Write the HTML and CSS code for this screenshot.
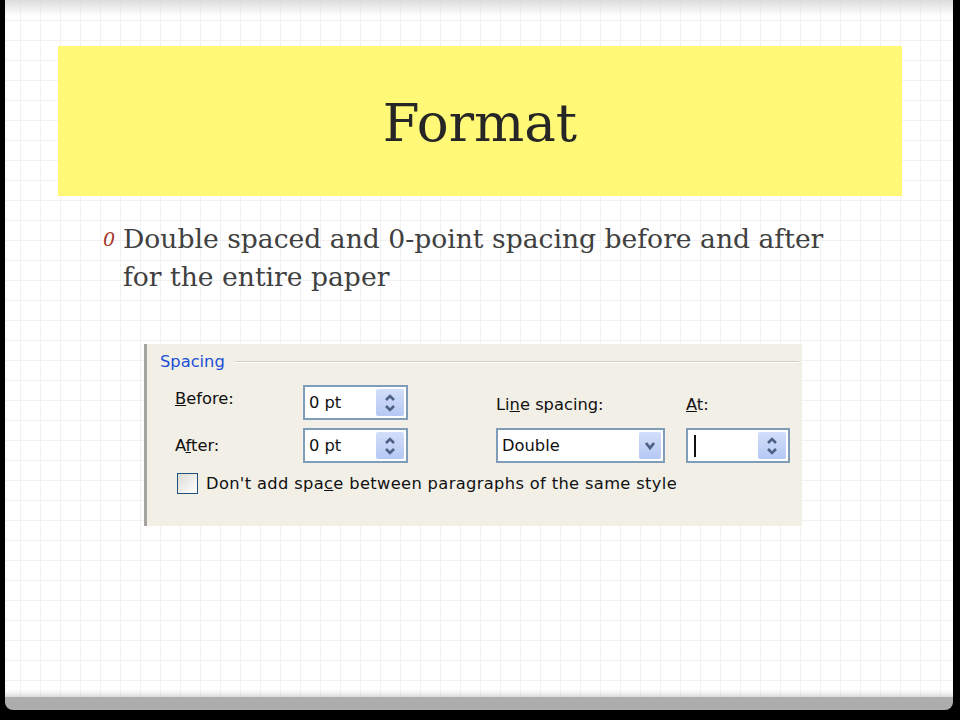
FILE: index.html
```html
<!DOCTYPE html>
<html lang="en">
<head>
    <meta charset="UTF-8">
    <title>Format</title>
    <link rel="stylesheet" href="styles.css">
</head>
<body>
    <div class="slide">
        <div class="title-bar">
            <h1>Format</h1>
        </div>

        <div class="bullet">
            <span class="bullet-mark">0</span>
            <p>Double spaced and 0-point spacing before and after for the entire paper</p>
        </div>

        <!-- Word paragraph dialog, spacing group -->
        <div class="dialog">
            <div class="group-head">
                <span class="group-name">Spacing</span>
                <span class="group-line"></span>
            </div>

            <div class="fields">
                <span class="label before"><u>B</u>efore:</span>
                <div class="box col-2">
                    <span class="value">0 pt</span>
                    <span class="spin-btn">
                        <svg width="14" height="22" viewBox="0 0 14 22"><path d="M3 8 L7 4 L11 8" fill="none" stroke="#4d6185" stroke-width="2.6"/><path d="M3 14 L7 18 L11 14" fill="none" stroke="#4d6185" stroke-width="2.6"/></svg>
                    </span>
                </div>
                <span class="label col-4">Li<u>n</u>e spacing:</span>
                <span class="label col-6"><u>A</u>t:</span>

                <span class="label after">A<u>f</u>ter:</span>
                <div class="box col-2">
                    <span class="value">0 pt</span>
                    <span class="spin-btn">
                        <svg width="14" height="22" viewBox="0 0 14 22"><path d="M3 8 L7 4 L11 8" fill="none" stroke="#4d6185" stroke-width="2.6"/><path d="M3 14 L7 18 L11 14" fill="none" stroke="#4d6185" stroke-width="2.6"/></svg>
                    </span>
                </div>
                <div class="box col-4">
                    <span class="value">Double</span>
                    <span class="spin-btn drop">
                        <svg width="14" height="14" viewBox="0 0 14 14"><path d="M3 4 L7 9 L11 4" fill="none" stroke="#4d6185" stroke-width="2.8"/></svg>
                    </span>
                </div>
                <div class="box col-6">
                    <span class="value"><span class="caret"></span></span>
                    <span class="spin-btn">
                        <svg width="14" height="22" viewBox="0 0 14 22"><path d="M3 8 L7 4 L11 8" fill="none" stroke="#4d6185" stroke-width="2.6"/><path d="M3 14 L7 18 L11 14" fill="none" stroke="#4d6185" stroke-width="2.6"/></svg>
                    </span>
                </div>
            </div>

            <label class="check-row">
                <span class="checkbox"></span>
                <span class="check-text">Don't add spa<u>c</u>e between paragraphs of the same style</span>
            </label>
        </div>
    </div>
</body>
</html>
```

FILE: styles.css
```css
body {
    margin: 0;
    background-color: #000;
    font-family: 'DejaVu Serif', serif;
}
.slide {
    width: 948px;
    height: 697px;
    margin-left: 5px;
    border-bottom: 13px solid #adadad;
    border-radius: 0 0 8px 8px;
    background-color: #fff;
    background-image:
        linear-gradient(to bottom, #dcdcdc, rgba(255,255,255,0) 16px),
        linear-gradient(to right, #f1f1f1 1px, transparent 1px),
        linear-gradient(to bottom, #f1f1f1 1px, transparent 1px);
    background-size: 100% 100%, 20px 20px, 20px 20px;
    background-position: 0 0, 15px 0, 0 0;
    background-repeat: no-repeat, repeat, repeat;
    box-shadow: inset 0 -6px 6px -4px #cfcfcf;
    overflow: hidden;
}
.title-bar {
    margin: 46px 0 0 53px;
    width: 844px;
    height: 150px;
    background-color: #fff977;
    display: flex;
    align-items: center;
    justify-content: center;
}
h1 {
    margin: 0;
    padding-top: 2px;
    font-size: 53px;
    font-weight: normal;
    color: #262626;
}

/* bullet text */
.bullet {
    display: flex;
    margin: 24px 0 0 98px;
    width: 740px;
}
.bullet-mark {
    width: 20px;
    font-size: 19px;
    font-style: italic;
    color: #a5372b;
    padding-top: 8px;
}
.bullet p {
    margin: 0;
    width: 712px;
    font-size: 26.6px;
    line-height: 38px;
    color: #404040;
}

/* dialog */
.dialog {
    margin: 48px 0 0 139px;
    width: 655px;
    height: 182px;
    border-left: 3px solid #a3a3a0;
    background-color: #f1efe6;
    font-family: 'DejaVu Sans', sans-serif;
    font-size: 16.3px;
    color: #111;
}
.group-head {
    display: flex;
    align-items: center;
    gap: 10px;
    padding: 8px 3px 0 13px;
}
.group-name {
    color: #1c4fd6;
}
.group-line {
    flex: 1;
    height: 0;
    border-top: 1px solid #d2d0c4;
    border-bottom: 1px solid #fff;
}
.fields {
    display: grid;
    grid-template-columns: 128px 105px 88px 169px 21px 104px;
    grid-template-rows: 35px 35px;
    row-gap: 8px;
    margin: 14px 0 0 28px;
    align-items: center;
}
.col-2 { grid-column: 2; }
.col-4 { grid-column: 4; }
.col-6 { grid-column: 6; }
.label {
    white-space: nowrap;
}
.label.before {
    grid-column: 1;
    align-self: start;
    padding-top: 4px;
}
.label.after {
    grid-column: 1;
    grid-row: 2;
}
.label.col-4,
.label.col-6 {
    grid-row: 1;
    padding-top: 4px;
}
.box {
    box-sizing: border-box;
    height: 35px;
    border: 2px solid #7f9db9;
    background-color: #fff;
    display: flex;
    align-items: center;
    padding: 2px 2px 2px 4px;
}
.value {
    flex: 1;
}
.spin-btn {
    width: 28px;
    height: 100%;
    border-radius: 2px;
    background: linear-gradient(to bottom, #d2defa, #b6c9f4);
    display: flex;
    align-items: center;
    justify-content: center;
}
.spin-btn.drop {
    width: 22px;
}
.caret {
    display: inline-block;
    width: 2px;
    height: 22px;
    background-color: #111;
    vertical-align: middle;
    margin-left: 2px;
}
.check-row {
    display: flex;
    align-items: center;
    gap: 8px;
    margin: 10px 0 0 30px;
}
.check-text {
    letter-spacing: 0.35px;
}
.checkbox {
    box-sizing: border-box;
    width: 21px;
    height: 21px;
    border: 1px solid #1c5180;
    background: linear-gradient(135deg, #dcdcd5, #fff);
}
```
